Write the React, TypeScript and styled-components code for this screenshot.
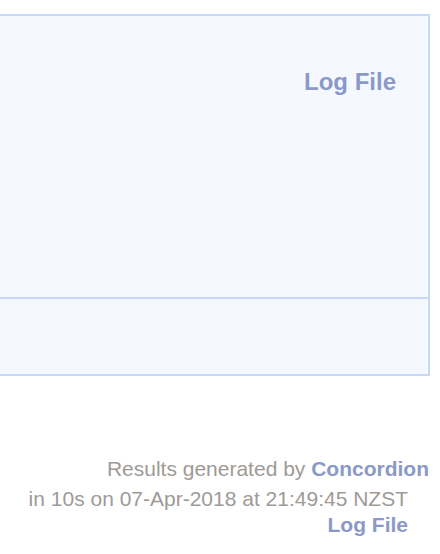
import styled, { createGlobalStyle } from "styled-components";

const GlobalStyle = createGlobalStyle`
  html, body {
    margin: 0;
    padding: 0;
    background: #ffffff;
    overflow: hidden;
  }

  body {
    font-family: "Liberation Sans", Arial, Helvetica, sans-serif;
  }
`;

export default function App() {
  return (
    <>
      <GlobalStyle />
      <Page>
        <Panel>
          <UpperSection>
            <BoxLink href="#">Log File</BoxLink>
          </UpperSection>
          <LowerSection />
        </Panel>
        <Footer>
          <FooterLine>
            Results generated by <FooterLink href="#">Concordion</FooterLink>
          </FooterLine>
          <FooterLine $indent>in 10s on 07-Apr-2018 at 21:49:45 NZST</FooterLine>
          <LogLine $indent>
            <FooterLink href="#">Log File</FooterLink>
          </LogLine>
        </Footer>
      </Page>
    </>
  );
}

const Page = styled.div`
  display: flex;
  flex-direction: column;
  padding-top: 14px;
  width: 440px;
`;

const Panel = styled.div`
  width: 452px;
  margin-left: -22px;
  border: 2px solid #c7d9fb;
  background-color: #f5f9ff;
  box-sizing: border-box;
  display: flex;
  flex-direction: column;
`;

const UpperSection = styled.div`
  height: 283px;
  padding: 54px 32px 0 0;
  box-sizing: border-box;
  display: flex;
  justify-content: flex-end;
  align-items: flex-start;
  border-bottom: 2px solid #c7d9fb;
`;

const BoxLink = styled.a`
  font-size: 24px;
  line-height: 24px;
  font-weight: bold;
  color: #8b99c9;
  text-decoration: none;
`;

const LowerSection = styled.div`
  height: 75px;
`;

const Footer = styled.div`
  margin-top: 78px;
  padding-right: 11px;
  display: flex;
  flex-direction: column;
  align-items: flex-end;
  font-size: 21px;
  color: #9e9a96;
`;

const FooterLine = styled.div<{ $indent?: boolean }>`
  line-height: 30px;
  white-space: nowrap;
  margin-right: ${(p) => (p.$indent ? "21px" : "0")};
`;

const LogLine = styled(FooterLine)`
  line-height: 22px;
`;

const FooterLink = styled.a`
  font-weight: bold;
  color: #8b99c9;
  text-decoration: none;
`;
